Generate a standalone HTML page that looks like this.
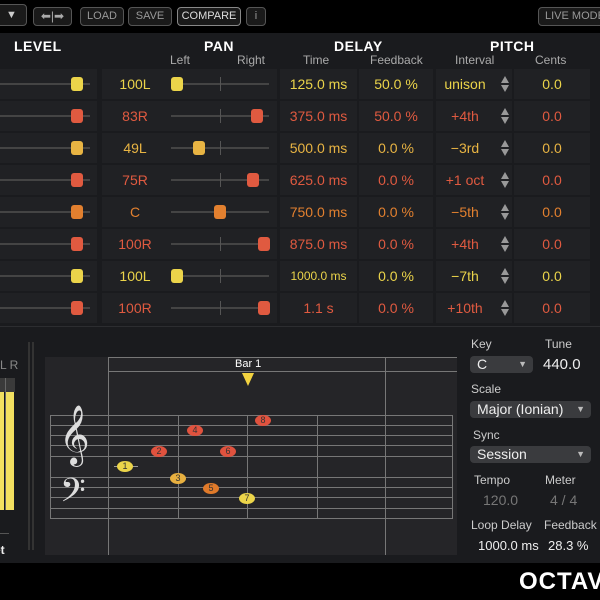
<!DOCTYPE html>
<html><head><meta charset="utf-8"><style>
*{margin:0;padding:0;box-sizing:border-box}
body{width:600px;height:600px;background:#000;position:relative;overflow:hidden;font-family:"Liberation Sans",sans-serif;color:#ddd}
.a{position:absolute}
.panel{left:0;top:33px;width:600px;height:530px;background:#1a1b1e}
.btn{position:absolute;top:7px;height:19px;border:1px solid #555;border-radius:4px;background:#1a1a1a;color:#999;font-size:11px;text-align:center;line-height:17px}
.hd{position:absolute;top:38px;font-weight:bold;font-size:14px;color:#fff;letter-spacing:.5px}
.sh{position:absolute;top:53px;font-size:12px;color:#aaa}
.c{position:absolute;height:30px;background:#202124;font-size:14px;text-align:center;line-height:30px}
.trk{position:absolute;height:2px;background:#444}
.tick{position:absolute;width:1px;height:14px;background:#555}
.k{position:absolute;width:12px;height:14px;border-radius:3px}
.ar{position:absolute;width:10px;height:18px}
.lb{position:absolute;font-size:12px;color:#ccc}
.dd{position:absolute;height:17px;background:#3a3b3e;border-radius:4px;color:#eee;font-size:14px;line-height:17px;padding-left:7px}
.dd i{position:absolute;right:6px;top:0;font-style:normal;font-size:9px;color:#bbb}
.hl{position:absolute;height:1px;background:#777}
.vl{position:absolute;width:1px;background:#777}
.n{position:absolute;width:16px;height:11px;border-radius:50%;font-size:9px;line-height:11px;text-align:center;color:#333}
</style></head><body>
<div class="a panel"></div>
<!-- top bar -->
<div class="btn" style="left:-4px;top:4px;width:31px;height:22px;line-height:20px;color:#ccc">▼</div>
<div class="btn" style="left:33px;width:39px;color:#aaa;font-size:12px">⬅|➡</div>
<div class="btn" style="left:80px;width:44px">LOAD</div>
<div class="btn" style="left:128px;width:44px">SAVE</div>
<div class="btn" style="left:177px;width:64px;color:#ddd;border-color:#888">COMPARE</div>
<div class="btn" style="left:246px;width:20px">i</div>
<div class="btn" style="left:538px;width:70px;text-align:left;padding-left:6px">LIVE MODE</div>
<!-- headers -->
<div class="hd" style="left:14px">LEVEL</div>
<div class="hd" style="left:204px">PAN</div>
<div class="hd" style="left:334px">DELAY</div>
<div class="hd" style="left:490px">PITCH</div>
<div class="sh" style="left:170px">Left</div>
<div class="sh" style="left:237px">Right</div>
<div class="sh" style="left:303px">Time</div>
<div class="sh" style="left:370px">Feedback</div>
<div class="sh" style="left:455px">Interval</div>
<div class="sh" style="left:535px">Cents</div>
<div id="rows"></div>
<!-- bottom -->
<div class="a" style="left:0;top:326px;width:600px;height:1px;background:#2c2d30"></div>
<div class="lb" style="left:0;top:358px;color:#888">L R</div>
<div class="a" style="left:0;top:378px;width:15px;height:14px;background:#3a3a3a"></div>
<div class="a" style="left:0;top:392px;width:4px;height:118px;background:#f2e060"></div>
<div class="a" style="left:6px;top:392px;width:8px;height:118px;background:#f2e060"></div>
<div class="a" style="left:5px;top:378px;width:1px;height:132px;background:#666"></div>
<div class="a" style="left:0;top:533px;width:9px;height:1px;background:#555"></div>
<div class="lb" style="left:-6px;top:543px;font-weight:bold;color:#eee">et</div>
<div class="a" style="left:28px;top:342px;width:2px;height:208px;background:#333"></div>
<div class="a" style="left:32px;top:342px;width:2px;height:208px;background:#333"></div>
<div class="a" style="left:45px;top:357px;width:412px;height:198px;background:#252528"></div>
<div class="vl" style="left:108px;top:357px;height:198px"></div>
<div class="hl" style="left:108px;top:357px;width:349px"></div>
<div class="hl" style="left:108px;top:371px;width:349px"></div>
<div class="vl" style="left:385px;top:357px;height:198px"></div>
<div class="a" style="left:235px;top:358px;font-size:11px;color:#fff">Bar 1</div>
<svg class="a" style="left:241px;top:372px" width="14" height="15"><path d="M1 1H13L7 14Z" fill="#f2d340"/></svg>
<div id="staff"></div>
<div class="a" style="left:59px;top:405px;font-size:52px;color:#ddd;font-family:'DejaVu Sans',serif;line-height:60px">𝄞</div>
<div class="a" style="left:60px;top:470px;font-size:40px;color:#ddd;font-family:'DejaVu Sans',serif;line-height:50px">𝄢</div>
<div class="a" style="left:114px;top:466px;width:24px;height:1px;background:#999"></div>
<div class="n" style="left:117px;top:461px;background:#ecd54a">1</div>
<div class="n" style="left:151px;top:446px;background:#e0523e">2</div>
<div class="n" style="left:170px;top:473px;background:#e8b040">3</div>
<div class="n" style="left:187px;top:425px;background:#e0523e">4</div>
<div class="n" style="left:203px;top:483px;background:#e07a2a">5</div>
<div class="n" style="left:220px;top:446px;background:#e0523e">6</div>
<div class="n" style="left:239px;top:493px;background:#ecd54a">7</div>
<div class="n" style="left:255px;top:415px;background:#e0523e">8</div>
<!-- right panel -->
<div class="lb" style="left:471px;top:337px">Key</div>
<div class="lb" style="left:545px;top:337px">Tune</div>
<div class="dd" style="left:470px;top:356px;width:63px">C<i>▼</i></div>
<div class="a" style="left:543px;top:356px;font-size:15px;color:#eee">440.0</div>
<div class="lb" style="left:471px;top:382px">Scale</div>
<div class="dd" style="left:470px;top:401px;width:121px">Major (Ionian)<i>▼</i></div>
<div class="lb" style="left:473px;top:428px">Sync</div>
<div class="dd" style="left:470px;top:446px;width:121px">Session<i>▼</i></div>
<div class="lb" style="left:474px;top:473px">Tempo</div>
<div class="lb" style="left:545px;top:473px">Meter</div>
<div class="a" style="left:483px;top:492px;font-size:14px;color:#777">120.0</div>
<div class="a" style="left:550px;top:492px;font-size:14px;color:#777">4 / 4</div>
<div class="lb" style="left:471px;top:518px">Loop Delay</div>
<div class="lb" style="left:544px;top:518px">Feedback</div>
<div class="a" style="left:478px;top:538px;font-size:13px;color:#eee">1000.0 ms</div>
<div class="a" style="left:548px;top:538px;font-size:13px;color:#eee">28.3 %</div>
<div class="a" style="left:519px;top:568px;font-size:24px;font-weight:bold;color:#fff;letter-spacing:1px">OCTAV</div>
<script>
var rows=[["#ebd44a","100L",177,"125.0 ms","50.0 %","unison"],["#e05a40","83R",257,"375.0 ms","50.0 %","+4th"],["#e8b443","49L",199,"500.0 ms","0.0 %","−3rd"],["#e05a40","75R",253,"625.0 ms","0.0 %","+1 oct"],["#e2802f","C",220,"750.0 ms","0.0 %","−5th"],["#e05a40","100R",264,"875.0 ms","0.0 %","+4th"],["#ebd44a","100L",177,"1000.0 ms","0.0 %","−7th"],["#e05a40","100R",264,"1.1 s","0.0 %","+10th"]];
var h="";rows.forEach(function(r,i){var t=69+i*32,c=r[0],m=t+15;
h+='<div class="c" style="left:0;top:'+t+'px;width:97px"></div>';
h+='<div class="trk" style="left:0;top:'+(m-1)+'px;width:90px"></div><div class="k" style="left:71px;top:'+(m-7)+'px;background:'+c+'"></div>';
h+='<div class="c" style="left:102px;top:'+t+'px;width:175px"></div>';
h+='<div class="a" style="left:102px;top:'+t+'px;width:66px;text-align:center;line-height:30px;font-size:14px;color:'+c+'">'+r[1]+'</div>';
h+='<div class="trk" style="left:171px;top:'+(m-1)+'px;width:98px"></div><div class="tick" style="left:220px;top:'+(m-7)+'px"></div><div class="k" style="left:'+(r[2]-6)+'px;top:'+(m-7)+'px;background:'+c+'"></div>';
h+='<div class="c" style="left:280px;top:'+t+'px;width:77px;color:'+c+(r[3].length>8?';font-size:12px':'')+'">'+r[3]+'</div>';
h+='<div class="c" style="left:359px;top:'+t+'px;width:74px;color:'+c+'">'+r[4]+'</div>';
h+='<div class="c" style="left:436px;top:'+t+'px;width:76px;color:'+c+';padding-right:18px">'+r[5]+'</div>';
h+='<svg class="ar" style="left:500px;top:'+(m-9)+'px" viewBox="0 0 10 18"><path d="M5 1L9 8H1Z M1 10H9L5 17Z" fill="#999"/></svg>';
h+='<div class="c" style="left:514px;top:'+t+'px;width:76px;color:'+c+'">0.0</div>';});
document.getElementById("rows").innerHTML=h;
var s="";[415,425,435,445,456,477,487,497,508,518].forEach(function(y){s+='<div class="hl" style="left:50px;top:'+y+'px;width:402px"></div>';});
[50,178,247,317,452].forEach(function(x){s+='<div class="vl" style="left:'+x+'px;top:415px;height:104px"></div>';});
document.getElementById("staff").innerHTML=s;
</script>
</body></html>
